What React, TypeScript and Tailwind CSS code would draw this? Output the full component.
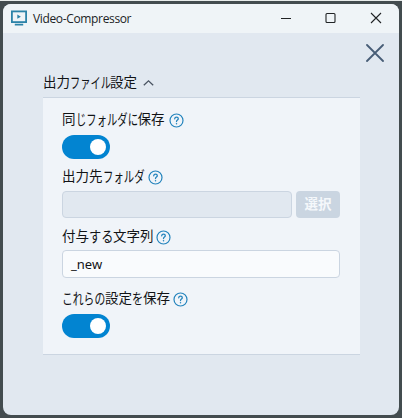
import React from 'react';

function Kana({ box, scale, children }: { box: string; scale: string; children: string }) {
  return (
    <span className={`inline-block whitespace-nowrap ${box}`}>
      <span className={`inline-block origin-left scale-y-[1.1] ${scale}`}>{children}</span>
    </span>
  );
}

function Help() {
  return (
    <svg className="mt-px h-[15px] w-[15px] shrink-0" viewBox="0 0 15 15" fill="none" stroke="#2484bd" strokeWidth="1.2" strokeLinecap="round">
      <circle cx="7.5" cy="7.5" r="6.5" />
      <path d="M5.7 5.8C5.8 4.7 6.5 4.1 7.5 4.1S9.3 4.8 9.3 5.7C9.3 7 7.5 7 7.5 8.5" strokeWidth="1.3" />
      <circle cx="7.5" cy="10.7" r=".75" fill="#2484bd" stroke="none" />
    </svg>
  );
}

function Toggle() {
  return (
    <button className="flex h-6 w-12 items-center justify-end rounded-full bg-[#0284d1] pr-1">
      <span className="h-4 w-4 rounded-full bg-white" />
    </button>
  );
}

function Label({ children, width }: { children: React.ReactNode; width: string }) {
  return (
    <div className="flex h-5 items-center">
      <span className={`flex h-5 shrink-0 items-center pb-[2px] whitespace-nowrap ${width}`}>{children}</span>
      <Help />
    </div>
  );
}

export default function App() {
  return (
    <div className="h-[418px] w-[402px] border-t border-[#e8eceb] bg-[#434c4f] pt-[3px] pl-[3px] font-['Noto_Sans','Noto_Sans_CJK_JP',sans-serif] text-[13.5px] leading-5 text-[#111316]">
      <div className="h-[411px] w-[396px] overflow-hidden rounded-lg bg-[#e1e8f0]">
        <header className="flex h-[29px] items-center bg-[#eff4f7] pl-2">
          <svg className="mb-[2px] h-4 w-4" viewBox="0 0 16 16" fill="none" stroke="#2c83a8" strokeWidth="1.8">
            <rect x=".9" y="1.4" width="14.2" height="10.7" />
            <path d="M3.8 14.6h8.4" />
            <path d="M6.3 4.6v4.2L9.9 6.7z" fill="#2c83a8" stroke="none" />
          </svg>
          <span className="ml-[6px] w-[240px] font-['Open_Sans','Noto_Sans',sans-serif] text-[12px] tracking-[-0.35px] text-[#202325]">Video-Compressor</span>
          <svg className="mb-px ml-2 h-3 w-[102px]" viewBox="0 0 102 12" fill="none" stroke="#202325" strokeWidth="1.1">
            <path d="M0 6.5h10" />
            <rect x="45" y="1.5" width="9" height="9" rx="1" />
            <path d="M90 1l10 10M100 1L90 11" />
          </svg>
        </header>
        <div className="flex h-[37px] justify-end pt-[11px] pr-[15px]">
          <svg className="h-[18px] w-[18px]" viewBox="0 0 18 18" fill="none" stroke="#475d76" strokeWidth="1.8" strokeLinecap="round">
            <path d="M1 1l16 16M17 1L1 17" />
          </svg>
        </div>
        <main className="ml-10 w-[317px]">
          <div className="flex h-[27px] items-center pb-[3px]">
            <span className="flex w-[100px] shrink-0">
              出力<Kana box="w-[40px]" scale="scale-x-[0.76]">ファイル</Kana>設定
            </span>
            <svg className="mt-[2px] h-[6px] w-[11px]" viewBox="0 0 11 6" fill="none" stroke="#4b5563" strokeWidth="1.3">
              <path d="M.8 5.3L5.5.9l4.7 4.4" />
            </svg>
          </div>
          <section className="h-[258px] border-y border-[#cbd5e1] bg-[#f0f4f9] pt-3 pr-[20px] pl-[19px]">
            <Label width="w-[107px]">同<Kana box="w-[62px]" scale="scale-x-[0.765]">じフォルダに</Kana>保存</Label>
            <div className="mt-[5px] h-6"><Toggle /></div>
            <div className="mt-[8px]">
              <Label width="w-[86px]">出力先<Kana box="w-[42px]" scale="scale-x-[0.77]">フォルダ</Kana></Label>
            </div>
            <div className="mt-[4px] flex gap-1">
              <div className="h-[27px] w-[230px] rounded border border-[#cbd5e1] bg-[#e1e8f0]" />
              <button className="h-[27px] w-[44px] rounded bg-[#cad5e1] pb-[2px] text-[13.5px] font-bold text-[#f5f8fb]">選択</button>
            </div>
            <div className="mt-[9px]">
              <Label width="w-[94px]">付与<Kana box="w-[24px]" scale="scale-x-[0.9]">する</Kana>文字列</Label>
            </div>
            <div className="mt-[3px] flex h-[28px] items-center rounded border border-[#cbd5e1] bg-[#f9fbfd] pl-[8px] text-[13px]">_new</div>
            <div className="mt-[11px]">
              <Label width="w-[111px]"><Kana box="w-[43px]" scale="scale-x-[0.8]">これらの</Kana>設定<Kana box="w-[11px]" scale="scale-x-[0.82]">を</Kana>保存</Label>
            </div>
            <div className="mt-[5px] h-6"><Toggle /></div>
          </section>
        </main>
      </div>
    </div>
  );
}
